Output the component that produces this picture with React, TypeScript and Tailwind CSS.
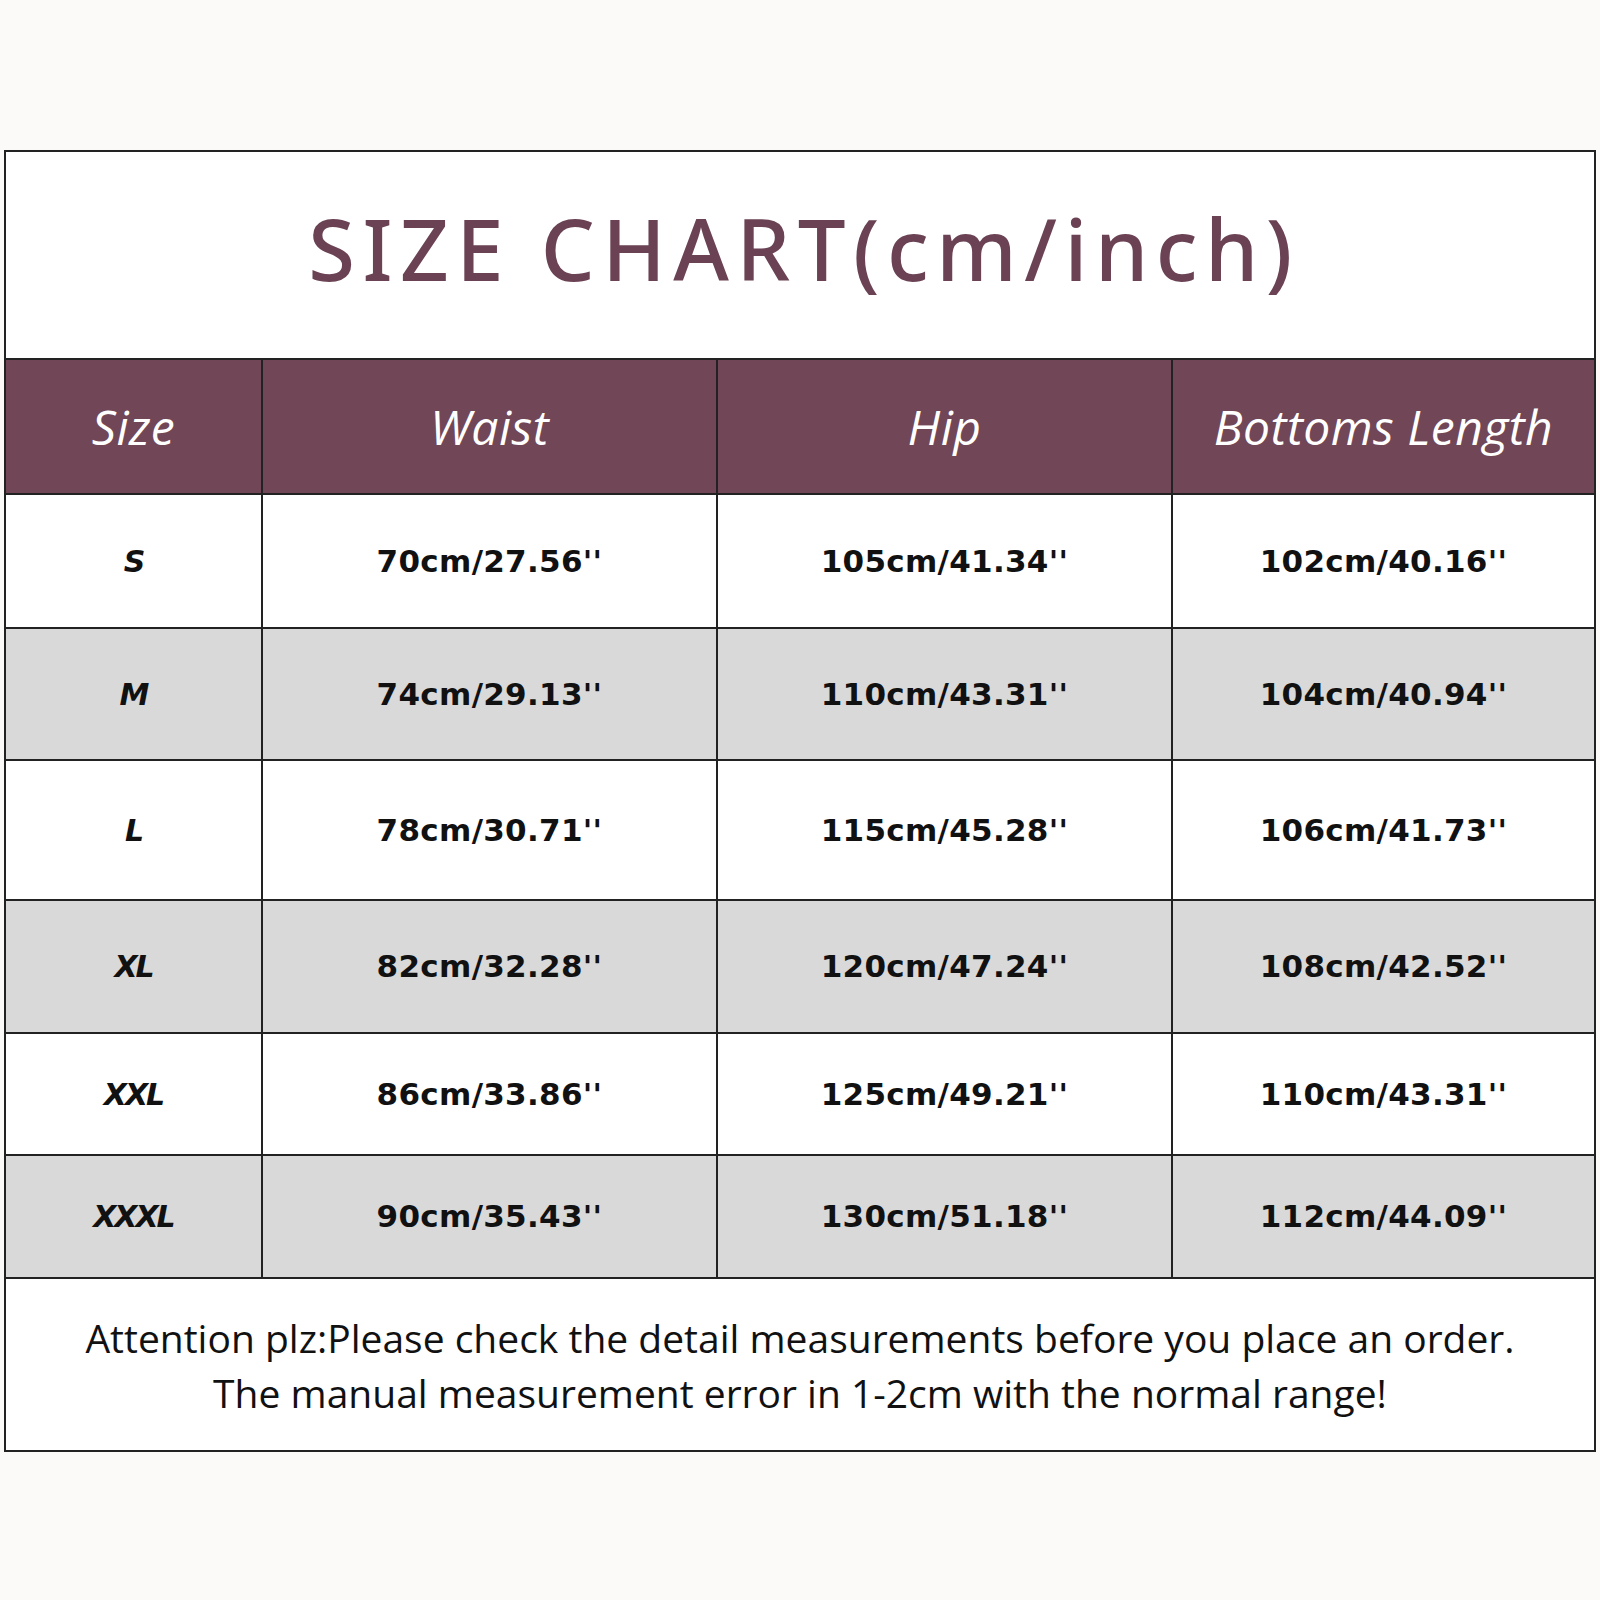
import React from "react";

type Row = { size: string; waist: string; hip: string; length: string; h: string; gray: boolean };

const rows: Row[] = [
  { size: "S", waist: "70cm/27.56''", hip: "105cm/41.34''", length: "102cm/40.16''", h: "h-[134px]", gray: false },
  { size: "M", waist: "74cm/29.13''", hip: "110cm/43.31''", length: "104cm/40.94''", h: "h-[132px]", gray: true },
  { size: "L", waist: "78cm/30.71''", hip: "115cm/45.28''", length: "106cm/41.73''", h: "h-[140px]", gray: false },
  { size: "XL", waist: "82cm/32.28''", hip: "120cm/47.24''", length: "108cm/42.52''", h: "h-[133px]", gray: true },
  { size: "XXL", waist: "86cm/33.86''", hip: "125cm/49.21''", length: "110cm/43.31''", h: "h-[122px]", gray: false },
  { size: "XXXL", waist: "90cm/35.43''", hip: "130cm/51.18''", length: "112cm/44.09''", h: "h-[123px]", gray: true },
];

const App: React.FC = () => {
  return (
    <div className="w-[1600px] h-[1600px] bg-[#fcf9f9] pt-[150px] pl-[4px]">
      <div className="w-[1592px] border-2 border-[#222] bg-white flex flex-col">
        {/* title */}
        <div className="h-[206px] flex items-center justify-center pb-[14px] pl-[8px]">
          <h1 className="font-['Noto_Sans',sans-serif] font-medium text-[85px] leading-none tracking-[7.5px] text-[#6b4254]">
            SIZE CHART(cm/inch)
          </h1>
        </div>

        {/* header */}
        <div className="h-[135px] flex border-t-2 border-[#222] bg-[#714656] text-white italic font-['Open_Sans',sans-serif] text-[48px] tracking-[0.5px]">
          <div className="w-[255px] flex items-center justify-center">Size</div>
          <div className="w-[455px] border-l-2 border-[#222] flex items-center justify-center">Waist</div>
          <div className="w-[455px] border-l-2 border-[#222] flex items-center justify-center">Hip</div>
          <div className="flex-1 border-l-2 border-[#222] flex items-center justify-center">Bottoms Length</div>
        </div>

        {rows.map((r) => (
          <div
            key={r.size}
            className={`${r.h} flex border-t-2 border-[#222] font-['DejaVu_Sans',sans-serif] font-bold text-[31px] tracking-[0.3px] text-[#111] ${
              r.gray ? "bg-[#d9d9d9]" : "bg-white"
            }`}
          >
            <div className="w-[255px] flex items-center justify-center italic text-[30px] tracking-[-2px]">{r.size}</div>
            <div className="w-[455px] border-l-2 border-[#222] flex items-center justify-center">{r.waist}</div>
            <div className="w-[455px] border-l-2 border-[#222] flex items-center justify-center">{r.hip}</div>
            <div className="flex-1 border-l-2 border-[#222] flex items-center justify-center">{r.length}</div>
          </div>
        ))}

        {/* note */}
        <div className="h-[173px] border-t-2 border-[#222] flex flex-col items-center justify-center font-['Open_Sans',sans-serif] text-[39px] leading-[55px] text-[#111]">
          <p>Attention plz:Please check the detail measurements before you place an order.</p>
          <p>The manual measurement error in 1-2cm with the normal range!</p>
        </div>
      </div>
    </div>
  );
};

export default App;
